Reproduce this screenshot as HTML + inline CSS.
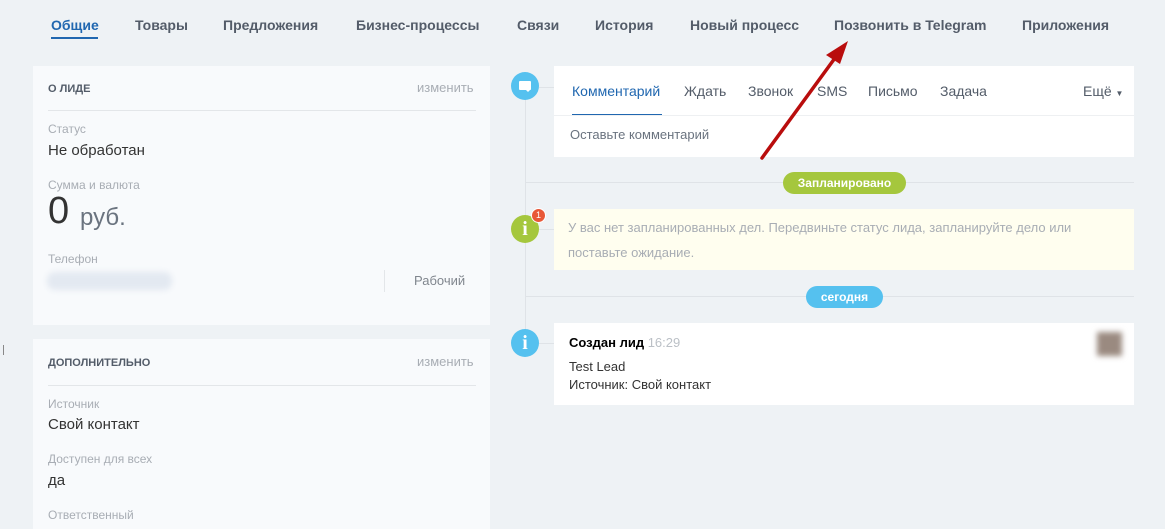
<!DOCTYPE html>
<html><head><meta charset="utf-8"><style>
*{margin:0;padding:0;box-sizing:border-box}
body{width:1165px;height:518px;background:#eef2f5;font-family:"Liberation Sans",sans-serif;position:relative;overflow:hidden;color:#333}
.a{position:absolute;white-space:nowrap}
.tab{font-size:14px;font-weight:bold;color:#535c69;top:17px}
.panel{position:absolute;left:33px;width:457px;background:#f8fafc}
.lbl{font-size:12px;color:#a8adb4}
.val{font-size:15px;color:#333}
.circ{position:absolute;left:511px;width:28px;height:28px;border-radius:50%;color:#fff;font-weight:bold;text-align:center;font-family:"Liberation Serif",serif;font-size:20px;line-height:28px}
.card{position:absolute;left:554px;width:580px;background:#fff}
</style></head><body>
<div class="a tab" style="left:51px;color:#2067b0">Общие</div>
<div class="a" style="left:51px;top:37px;width:47px;height:2px;background:#2067b0"></div>
<div class="a tab" style="left:135px">Товары</div>
<div class="a tab" style="left:223px">Предложения</div>
<div class="a tab" style="left:356px">Бизнес-процессы</div>
<div class="a tab" style="left:517px">Связи</div>
<div class="a tab" style="left:595px">История</div>
<div class="a tab" style="left:690px">Новый процесс</div>
<div class="a tab" style="left:834px">Позвонить в Telegram</div>
<div class="a tab" style="left:1022px">Приложения</div>

<div class="panel" style="top:66px;height:259px">
<div class="a" style="left:15px;top:17px;font-size:11px;font-weight:bold;color:#535c69">О ЛИДЕ</div>
<div class="a" style="left:384px;top:14px;font-size:13px;color:#a8adb4">изменить</div>
<div class="a" style="left:15px;top:44px;width:428px;height:1px;background:#e3e6e9"></div>
<div class="a lbl" style="left:15px;top:56px">Статус</div>
<div class="a val" style="left:15px;top:76px">Не обработан</div>
<div class="a lbl" style="left:15px;top:112px">Сумма и валюта</div>
<div class="a" style="left:15px;top:124px;font-size:38px;color:#333">0</div>
<div class="a" style="left:47px;top:138px;font-size:24px;color:#6a737f">руб.</div>
<div class="a lbl" style="left:15px;top:186px">Телефон</div>
<div class="a" style="left:14px;top:206px;width:125px;height:18px;background:#e3e9f1;border-radius:8px;filter:blur(3px)"></div>
<div class="a" style="left:351px;top:204px;width:1px;height:22px;background:#e3e6e9"></div>
<div class="a" style="left:381px;top:207px;font-size:13px;color:#80868e">Рабочий</div>
</div>
<div class="panel" style="top:339px;height:190px">
<div class="a" style="left:15px;top:18px;font-size:11px;font-weight:bold;color:#535c69">ДОПОЛНИТЕЛЬНО</div>
<div class="a" style="left:384px;top:15px;font-size:13px;color:#a8adb4">изменить</div>
<div class="a" style="left:15px;top:46px;width:428px;height:1px;background:#e3e6e9"></div>
<div class="a lbl" style="left:15px;top:58px">Источник</div>
<div class="a val" style="left:15px;top:77px">Свой контакт</div>
<div class="a lbl" style="left:15px;top:113px">Доступен для всех</div>
<div class="a val" style="left:15px;top:133px">да</div>
<div class="a lbl" style="left:15px;top:169px">Ответственный</div>
</div>
<div class="a" style="left:3px;top:345px;width:1px;height:10px;background:#888"></div>

<div class="a" style="left:525px;top:90px;width:1px;height:260px;background:#dfe3e7"></div>
<div class="a" style="left:525px;top:182px;width:609px;height:1px;background:#dfe3e7"></div>
<div class="a" style="left:525px;top:296px;width:609px;height:1px;background:#dfe3e7"></div>
<div class="a" style="left:539px;top:87px;width:15px;height:1px;background:#dfe3e7"></div>
<div class="a" style="left:539px;top:229px;width:15px;height:1px;background:#dfe3e7"></div>
<div class="a" style="left:539px;top:343px;width:15px;height:1px;background:#dfe3e7"></div>

<div class="circ" style="top:72px;background:#55c1ef"><div style="position:absolute;left:8px;top:9px;width:12px;height:9px;background:#fff;border-radius:1px"></div><div style="position:absolute;left:14px;top:17px;border-left:3px solid transparent;border-right:3px solid transparent;border-top:3px solid #fff"></div></div>
<div class="circ" style="top:215px;background:#a5c73d">i</div>
<div class="a" style="left:531px;top:208px;width:15px;height:15px;border-radius:50%;background:#e85838;border:1.5px solid #fff;color:#fff;font-size:9px;text-align:center;line-height:12px">1</div>
<div class="circ" style="top:329px;background:#55c1ef">i</div>

<div class="card" style="top:66px;height:91px">
<div class="a" style="left:18px;top:17px;font-size:14px;color:#2067b0">Комментарий</div>
<div class="a" style="left:18px;top:48px;width:90px;height:2px;background:#2067b0"></div>
<div class="a" style="left:0;top:49px;width:580px;height:1px;background:#eef0f2"></div>
<div class="a" style="left:130px;top:17px;font-size:14px;color:#535c69">Ждать</div>
<div class="a" style="left:194px;top:17px;font-size:14px;color:#535c69">Звонок</div>
<div class="a" style="left:263px;top:17px;font-size:14px;color:#535c69">SMS</div>
<div class="a" style="left:314px;top:17px;font-size:14px;color:#535c69">Письмо</div>
<div class="a" style="left:386px;top:17px;font-size:14px;color:#535c69">Задача</div>
<div class="a" style="left:529px;top:17px;font-size:14px;color:#535c69">Ещё <span style="font-size:8px">▼</span></div>
<div class="a" style="left:16px;top:61px;font-size:13px;color:#6a737f">Оставьте комментарий</div>
</div>

<div class="a" style="left:783px;top:172px;width:123px;height:22px;border-radius:11px;background:#a5c73d;color:#fff;font-size:12px;font-weight:bold;text-align:center;line-height:22px">Запланировано</div>
<div class="card" style="top:209px;height:61px;background:#fffeef">
<div class="a" style="left:14px;top:6px;font-size:13px;line-height:25px;color:#a8adb4;white-space:normal;width:530px">У вас нет запланированных дел. Передвиньте статус лида, запланируйте дело или поставьте ожидание.</div>
</div>
<div class="a" style="left:806px;top:286px;width:77px;height:22px;border-radius:11px;background:#55c1ef;color:#fff;font-size:12px;font-weight:bold;text-align:center;line-height:22px">сегодня</div>
<div class="card" style="top:323px;height:82px">
<div class="a" style="left:15px;top:12px;font-size:13px;font-weight:bold;color:#000">Создан лид <span style="font-weight:normal;color:#bbc0c6">16:29</span></div>
<div class="a" style="left:15px;top:36px;font-size:13px;color:#333">Test Lead</div>
<div class="a" style="left:15px;top:54px;font-size:13px;color:#333">Источник: Свой контакт</div>
<div class="a" style="left:543px;top:9px;width:25px;height:24px;background:#9a8a80;filter:blur(3px)"></div>
</div>

<svg class="a" style="left:0;top:0" width="1165" height="518"><line x1="762" y1="158" x2="835" y2="58" stroke="#b90d0d" stroke-width="3.5" stroke-linecap="round"/><polygon points="848,41 826,55 840,64" fill="#b90d0d"/></svg>
</body></html>
